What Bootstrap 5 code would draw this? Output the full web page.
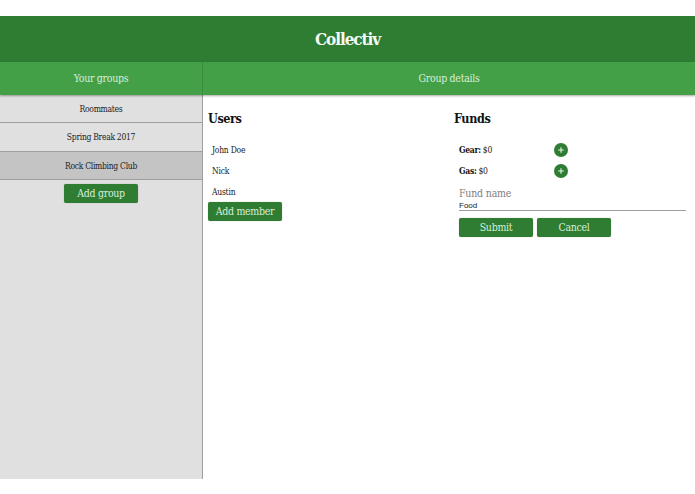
<!DOCTYPE html>
<html lang="en">
<head>
    <meta charset="UTF-8">
    <meta name="viewport" content="width=device-width, initial-scale=1.0">
    <title>Collectiv</title>
    <link href="https://cdn.jsdelivr.net/npm/bootstrap@5.3.3/dist/css/bootstrap.min.css" rel="stylesheet">
    <style>
        html, body { height: 100%; overflow: hidden; }
        body { background: #fff; font-family: "DejaVu Serif Condensed", "DejaVu Serif", serif; font-stretch: condensed; color: #212121; padding: 16px 0 15px; }
        .app-shell { height: 463px; }
        .app-title { height: 46px; background: #2e7d32; color: #f4f9f4; font-size: 17px; font-weight: 700; letter-spacing: -1.1px; padding-top: 1px; }
        .sub-head { height: 33px; background: #43a047; color: #d9edda; font-size: 10.5px; letter-spacing: -.3px; box-shadow: 0 1px 2px rgba(0,0,0,.35); position: relative; }
        .side-w { width: 203px; flex: none; }
        .side-head { border-right: 1px solid #388e3c; }
        .side-panel { background: #e0e0e0; border-right: 1px solid #9e9e9e; }
        .group-row { height: 28.4px; font-size: 8.5px; letter-spacing: -.3px; padding-top: 1px; border-bottom: 1px solid #9e9e9e; }
        .group-row.is-active { background: #c4c4c4; }
        .app-btn { display: block; background: #2e7d32; color: #d9edda; font-family: inherit; font-size: 10.5px; letter-spacing: -.3px; line-height: 1; width: 74px; height: 19px; padding: 0; border: 0; border-radius: 2px; box-shadow: 0 0 1px rgba(0,0,0,.4); }
        .app-btn:hover { background: #2e7d32; color: #d9edda; }
        .details-pane { padding-left: 5px; padding-right: 9px; }
        .sec-title { font-size: 12.5px; font-weight: 700; letter-spacing: -.4px; color: #111; margin: 15px 0 11px; line-height: 18px; }
        .user-row { font-size: 8.5px; letter-spacing: -.25px; height: 21px; padding-left: 4px; line-height: 23px; }
        .funds-col { width: 232px; flex: none; }
        .fund-row { height: 21px; padding-left: 5px; font-size: 8.5px; letter-spacing: -.3px; }
        .fund-name { width: 95px; line-height: 23px; }
        .fund-name b { font-weight: 700; color: #111; }
        .plus-btn { width: 14px; height: 14px; margin-top: 4px; background: #2e7d32; }
        .fund-form { padding-left: 5px; margin-top: 4px; }
        .field-lbl { font-size: 10.5px; letter-spacing: -.2px; line-height: 16px; color: #808080; }
        .field-val { font-family: "Liberation Sans", sans-serif; font-size: 8px; line-height: 10px; color: #212121; border-bottom: 1px solid #9e9e9e; height: 10px; }
        .form-btns { margin-top: 7px; }
    </style>
</head>
<body>
    <div class="app-shell d-flex flex-column">
        <div class="app-title d-flex align-items-center justify-content-center">Collectiv</div>
        <div class="sub-head d-flex">
            <div class="side-w side-head d-flex align-items-center justify-content-center">Your groups</div>
            <div class="flex-grow-1 d-flex align-items-center justify-content-center">Group details</div>
        </div>
        <div class="d-flex flex-grow-1">
            <!-- Groups -->
            <div class="side-w side-panel">
                <div class="group-row d-flex align-items-center justify-content-center">Roommates</div>
                <div class="group-row d-flex align-items-center justify-content-center">Spring Break 2017</div>
                <div class="group-row is-active d-flex align-items-center justify-content-center">Rock Climbing Club</div>
                <button class="btn app-btn mx-auto mt-1">Add group</button>
            </div>
            <!-- Details -->
            <div class="flex-grow-1 d-flex justify-content-between details-pane">
                <div>
                    <h2 class="sec-title">Users</h2>
                    <div class="user-row">John Doe</div>
                    <div class="user-row">Nick</div>
                    <div class="user-row">Austin</div>
                    <button class="btn app-btn">Add member</button>
                </div>
                <div class="funds-col">
                    <h2 class="sec-title">Funds</h2>
                    <div class="fund-row d-flex"><span class="fund-name"><b>Gear:</b> $0</span>
                        <span class="plus-btn rounded-circle d-inline-flex align-items-center justify-content-center"><svg width="8" height="8" viewBox="0 0 8 8"><path d="M4 1.2v5.6M1.2 4h5.6" stroke="#e8f5e9" stroke-width="1.1"/></svg></span></div>
                    <div class="fund-row d-flex"><span class="fund-name"><b>Gas:</b> $0</span>
                        <span class="plus-btn rounded-circle d-inline-flex align-items-center justify-content-center"><svg width="8" height="8" viewBox="0 0 8 8"><path d="M4 1.2v5.6M1.2 4h5.6" stroke="#e8f5e9" stroke-width="1.1"/></svg></span></div>
                    <div class="fund-form">
                        <div class="field-lbl">Fund name</div>
                        <div class="field-val">Food</div>
                        <div class="d-flex gap-1 form-btns">
                            <button class="btn app-btn">Submit</button>
                            <button class="btn app-btn">Cancel</button>
                        </div>
                    </div>
                </div>
            </div>
        </div>
    </div>
    <script src="https://cdn.jsdelivr.net/npm/bootstrap@5.3.3/dist/js/bootstrap.bundle.min.js"></script>
</body>
</html>
